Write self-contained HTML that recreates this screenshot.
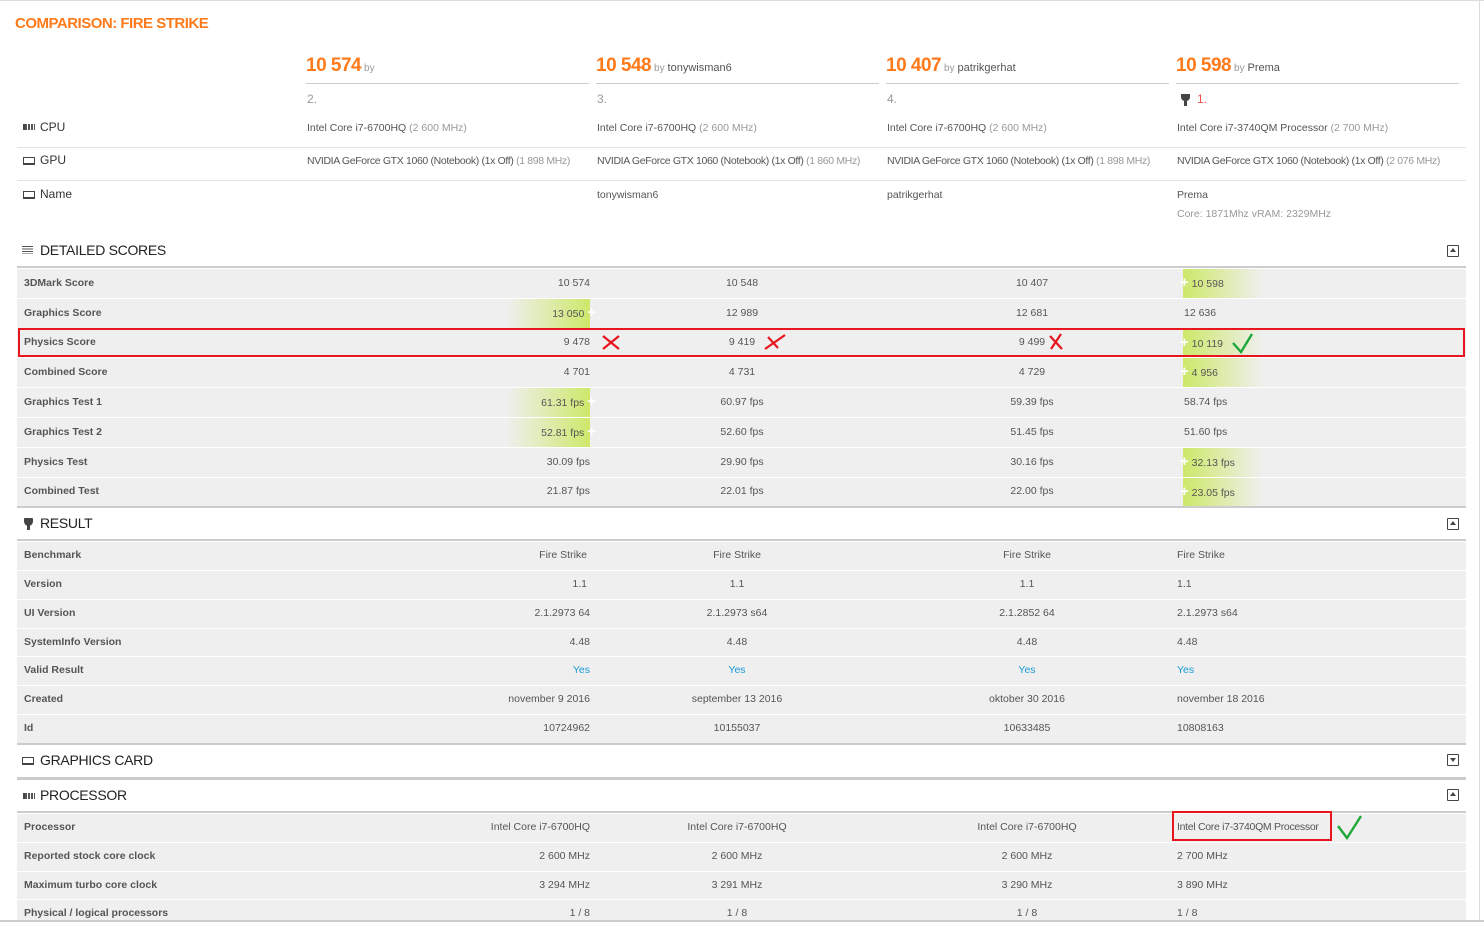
<!DOCTYPE html>
<html><head><meta charset="utf-8"><style>
*{margin:0;padding:0;box-sizing:border-box}
body{width:1484px;height:922px;overflow:hidden;background:#fff;font-family:"Liberation Sans",sans-serif;color:#555;position:relative;font-size:10.5px}
.a{position:absolute;white-space:nowrap}
.r{position:absolute;left:17px;width:1449px;background:#efefef;border-top:1px solid #fff}
.r span{position:absolute;top:0;white-space:nowrap}
.l{left:7px;font-weight:bold;color:#555}
.c1{right:876px;text-align:right}
.c2,.c3{width:200px;text-align:center}
.c4{left:1167px}
.g1{position:absolute;top:0;bottom:0;left:490px;width:83px;background:linear-gradient(to right,rgba(205,232,106,0),#cde86a)}
.g4{position:absolute;top:0;bottom:0;left:1166px;width:80px;background:linear-gradient(to right,#cde86a,rgba(205,232,106,0))}
.pl{color:#fff;font-weight:bold;font-size:15px}
.h{position:absolute;left:40px;font-size:14px;color:#222;letter-spacing:-0.3px}
.hl{position:absolute;left:17px;width:1449px;height:2px;background:#ccc}
.sc{font-size:19px;font-weight:bold;color:#ff7a1a;letter-spacing:-0.5px}
.by{font-size:10px;color:#999}
.byn{font-size:11px;color:#555}
.ul{position:absolute;height:1px;background:#ccc;top:83px;width:283px}
.gr{color:#999}
.tg{position:absolute;width:12px;height:12px;border:1.5px solid #444;border-radius:1px;left:1447px}
.y{color:#1a9ad6}
.gpu{letter-spacing:-0.35px}
</style></head><body>
<div class="a" style="left:0;top:0;width:1484px;height:1px;background:#ddd"></div>
<div class="a" style="left:1479px;top:0;width:1px;height:922px;background:#ddd"></div>
<div class="a" style="left:15px;top:15px;font-size:15px;font-weight:bold;color:#ff7a1a;letter-spacing:-0.5px">COMPARISON: FIRE STRIKE</div>

<div class="a" style="left:306px;top:55px"><span class="sc">10 574</span> <span class="by">by</span></div>
<div class="a" style="left:596px;top:55px"><span class="sc">10 548</span> <span class="by">by</span> <span class="byn">tonywisman6</span></div>
<div class="a" style="left:886px;top:55px"><span class="sc">10 407</span> <span class="by">by</span> <span class="byn">patrikgerhat</span></div>
<div class="a" style="left:1176px;top:55px"><span class="sc">10 598</span> <span class="by">by</span> <span class="byn">Prema</span></div>
<div class="ul" style="left:306px"></div><div class="ul" style="left:596px"></div><div class="ul" style="left:886px"></div><div class="ul" style="left:1176px"></div>
<div class="a gr" style="left:307px;top:92px;font-size:12px">2.</div>
<div class="a gr" style="left:597px;top:92px;font-size:12px">3.</div>
<div class="a gr" style="left:887px;top:92px;font-size:12px">4.</div>
<div class="a" style="left:1181px;top:94px;width:9px;height:7px;background:#444;border-radius:0 0 4px 4px"></div>
<div class="a" style="left:1184px;top:101px;width:3px;height:5px;background:#444"></div>
<div class="a" style="left:1197px;top:92px;font-size:12px;color:#f05050">1.</div>

<div class="a" style="left:23px;top:124px;width:12px;height:6px;border-left:2px solid #444;background:repeating-linear-gradient(to right,#555 0 2px,#fff 2px 3px)"></div>
<div class="a" style="left:40px;top:120px;font-size:12px;color:#333">CPU</div>
<div class="a" style="left:23px;top:157px;width:12px;height:8px;border:1.5px solid #444;border-bottom-width:2.5px"></div>
<div class="a" style="left:40px;top:153px;font-size:12px;color:#333">GPU</div>
<div class="a" style="left:23px;top:191px;width:12px;height:8px;border:1.5px solid #444;border-bottom-width:2.5px"></div>
<div class="a" style="left:40px;top:187px;font-size:12px;color:#333">Name</div>
<div class="a" style="left:17px;top:147px;width:1449px;height:1px;background:#e4e4e4"></div>
<div class="a" style="left:17px;top:180px;width:1449px;height:1px;background:#e4e4e4"></div>
<div class="a" style="left:307px;top:122px">Intel Core i7-6700HQ <span class="gr">(2 600 MHz)</span></div>
<div class="a" style="left:597px;top:122px">Intel Core i7-6700HQ <span class="gr">(2 600 MHz)</span></div>
<div class="a" style="left:887px;top:122px">Intel Core i7-6700HQ <span class="gr">(2 600 MHz)</span></div>
<div class="a" style="left:1177px;top:122px">Intel Core i7-3740QM Processor <span class="gr">(2 700 MHz)</span></div>
<div class="a gpu" style="left:307px;top:155px">NVIDIA GeForce GTX 1060 (Notebook) (1x Off) <span class="gr">(1 898 MHz)</span></div>
<div class="a gpu" style="left:597px;top:155px">NVIDIA GeForce GTX 1060 (Notebook) (1x Off) <span class="gr">(1 860 MHz)</span></div>
<div class="a gpu" style="left:887px;top:155px">NVIDIA GeForce GTX 1060 (Notebook) (1x Off) <span class="gr">(1 898 MHz)</span></div>
<div class="a gpu" style="left:1177px;top:155px">NVIDIA GeForce GTX 1060 (Notebook) (1x Off) <span class="gr">(2 076 MHz)</span></div>
<div class="a" style="left:597px;top:189px">tonywisman6</div>
<div class="a" style="left:887px;top:189px">patrikgerhat</div>
<div class="a" style="left:1177px;top:189px">Prema</div>
<div class="a gr" style="left:1177px;top:208px">Core: 1871Mhz vRAM: 2329MHz</div>

<!-- DETAILED -->
<div class="a" style="left:22px;top:246px;width:11px;height:8px;background:repeating-linear-gradient(#555 0 1px,#fff 1px 2.5px)"></div>
<div class="h" style="top:242px">DETAILED SCORES</div>
<div class="tg" style="top:245px"><div class="a" style="left:2px;top:2px;border:3px solid transparent;border-bottom:4px solid #444;border-top:0"></div></div>
<div class="hl" style="top:266px"></div>

<div class="r" style="top:268px;height:30px;line-height:28px"><span class="l">3DMark Score</span><span class="c1">10 574</span><span class="c2" style="left:625px">10 548</span><span class="c3" style="left:915px">10 407</span><div class="g4"></div><span class="c4" style="left:1163px"><b class="pl">+</b> 10 598</span></div>
<div class="r" style="top:298px;height:30px;line-height:28px"><div class="g1"></div><span class="l">Graphics Score</span><span class="c1" style="right:870px">13 050 <b class="pl">+</b></span><span class="c2" style="left:625px">12 989</span><span class="c3" style="left:915px">12 681</span><span class="c4">12 636</span></div>
<div class="r" style="top:328px;height:29px;line-height:27px"><span class="l">Physics Score</span><span class="c1">9 478</span><span class="c2" style="left:625px">9 419</span><span class="c3" style="left:915px">9 499</span><div class="g4"></div><span class="c4" style="left:1163px"><b class="pl">+</b> 10 119</span></div>
<div class="r" style="top:357px;height:30px;line-height:28px"><span class="l">Combined Score</span><span class="c1">4 701</span><span class="c2" style="left:625px">4 731</span><span class="c3" style="left:915px">4 729</span><div class="g4"></div><span class="c4" style="left:1163px"><b class="pl">+</b> 4 956</span></div>
<div class="r" style="top:387px;height:30px;line-height:28px"><div class="g1"></div><span class="l">Graphics Test 1</span><span class="c1" style="right:870px">61.31 fps <b class="pl">+</b></span><span class="c2" style="left:625px">60.97 fps</span><span class="c3" style="left:915px">59.39 fps</span><span class="c4">58.74 fps</span></div>
<div class="r" style="top:417px;height:30px;line-height:28px"><div class="g1"></div><span class="l">Graphics Test 2</span><span class="c1" style="right:870px">52.81 fps <b class="pl">+</b></span><span class="c2" style="left:625px">52.60 fps</span><span class="c3" style="left:915px">51.45 fps</span><span class="c4">51.60 fps</span></div>
<div class="r" style="top:447px;height:30px;line-height:28px"><span class="l">Physics Test</span><span class="c1">30.09 fps</span><span class="c2" style="left:625px">29.90 fps</span><span class="c3" style="left:915px">30.16 fps</span><div class="g4"></div><span class="c4" style="left:1163px"><b class="pl">+</b> 32.13 fps</span></div>
<div class="r" style="top:477px;height:29px;line-height:27px"><span class="l">Combined Test</span><span class="c1">21.87 fps</span><span class="c2" style="left:625px">22.01 fps</span><span class="c3" style="left:915px">22.00 fps</span><div class="g4"></div><span class="c4" style="left:1163px"><b class="pl">+</b> 23.05 fps</span></div>
<div class="hl" style="top:506px"></div>

<!-- RESULT -->
<div class="a" style="left:24px;top:518px;width:9px;height:8px;background:#444;border-radius:1px 1px 5px 5px"></div>
<div class="a" style="left:27px;top:525px;width:3px;height:5px;background:#444"></div>
<div class="h" style="top:515px">RESULT</div>
<div class="tg" style="top:518px"><div class="a" style="left:2px;top:2px;border:3px solid transparent;border-bottom:4px solid #444;border-top:0"></div></div>
<div class="hl" style="top:539px"></div>
<div class="r" style="top:541px;height:29px;line-height:27px"><span class="l">Benchmark</span><span class="c1" style="right:879px">Fire Strike</span><span class="c2" style="left:620px">Fire Strike</span><span class="c3" style="left:910px">Fire Strike</span><span class="c4" style="left:1160px">Fire Strike</span></div>
<div class="r" style="top:570px;height:29px;line-height:27px"><span class="l">Version</span><span class="c1" style="right:879px">1.1</span><span class="c2" style="left:620px">1.1</span><span class="c3" style="left:910px">1.1</span><span class="c4" style="left:1160px">1.1</span></div>
<div class="r" style="top:599px;height:29px;line-height:27px"><span class="l">UI Version</span><span class="c1">2.1.2973 64</span><span class="c2" style="left:620px">2.1.2973 s64</span><span class="c3" style="left:910px">2.1.2852 64</span><span class="c4" style="left:1160px">2.1.2973 s64</span></div>
<div class="r" style="top:628px;height:28px;line-height:26px"><span class="l">SystemInfo Version</span><span class="c1">4.48</span><span class="c2" style="left:620px">4.48</span><span class="c3" style="left:910px">4.48</span><span class="c4" style="left:1160px">4.48</span></div>
<div class="r" style="top:656px;height:29px;line-height:27px"><span class="l">Valid Result</span><span class="c1 y">Yes</span><span class="c2 y" style="left:620px">Yes</span><span class="c3 y" style="left:910px">Yes</span><span class="c4 y" style="left:1160px">Yes</span></div>
<div class="r" style="top:685px;height:29px;line-height:27px"><span class="l">Created</span><span class="c1">november 9 2016</span><span class="c2" style="left:620px">september 13 2016</span><span class="c3" style="left:910px">oktober 30 2016</span><span class="c4" style="left:1160px">november 18 2016</span></div>
<div class="r" style="top:714px;height:29px;line-height:27px"><span class="l">Id</span><span class="c1">10724962</span><span class="c2" style="left:620px">10155037</span><span class="c3" style="left:910px">10633485</span><span class="c4" style="left:1160px">10808163</span></div>
<div class="hl" style="top:743px"></div>

<!-- GRAPHICS CARD -->
<div class="a" style="left:22px;top:757px;width:12px;height:8px;border:1.5px solid #444;border-bottom-width:2.5px"></div>
<div class="h" style="top:752px">GRAPHICS CARD</div>
<div class="tg" style="top:754px"><div class="a" style="left:2px;top:3px;border:3px solid transparent;border-top:4px solid #444;border-bottom:0"></div></div>
<div class="hl" style="top:777px;height:3px"></div>

<!-- PROCESSOR -->
<div class="a" style="left:23px;top:793px;width:12px;height:6px;border-left:2px solid #444;background:repeating-linear-gradient(to right,#555 0 2px,#fff 2px 3px)"></div>
<div class="h" style="top:787px">PROCESSOR</div>
<div class="tg" style="top:789px"><div class="a" style="left:2px;top:2px;border:3px solid transparent;border-bottom:4px solid #444;border-top:0"></div></div>
<div class="hl" style="top:811px"></div>
<div class="r" style="top:813px;height:29px;line-height:27px"><span class="l">Processor</span><span class="c1">Intel Core i7-6700HQ</span><span class="c2" style="left:620px">Intel Core i7-6700HQ</span><span class="c3" style="left:910px">Intel Core i7-6700HQ</span><span class="c4" style="left:1160px;letter-spacing:-0.3px">Intel Core i7-3740QM Processor</span></div>
<div class="r" style="top:842px;height:29px;line-height:27px"><span class="l">Reported stock core clock</span><span class="c1">2 600 MHz</span><span class="c2" style="left:620px">2 600 MHz</span><span class="c3" style="left:910px">2 600 MHz</span><span class="c4" style="left:1160px">2 700 MHz</span></div>
<div class="r" style="top:871px;height:28px;line-height:26px"><span class="l">Maximum turbo core clock</span><span class="c1">3 294 MHz</span><span class="c2" style="left:620px">3 291 MHz</span><span class="c3" style="left:910px">3 290 MHz</span><span class="c4" style="left:1160px">3 890 MHz</span></div>
<div class="r" style="top:899px;height:23px;line-height:27px"><span class="l">Physical / logical processors</span><span class="c1">1 / 8</span><span class="c2" style="left:620px">1 / 8</span><span class="c3" style="left:910px">1 / 8</span><span class="c4" style="left:1160px">1 / 8</span></div>

<!-- red/green marks on top -->
<div class="a" style="left:18px;top:328px;width:1447px;height:29px;border:2px solid #e8141e"></div>
<div class="a" style="left:1172px;top:811px;width:160px;height:30px;border:2px solid #e8141e"></div>
<svg class="a" style="left:0;top:0" width="1484" height="922">
<g stroke="#e8141e" stroke-width="2.2" fill="none">
<path d="M603 336 L619 349 M603 349 L619 336"/>
<path d="M765 349 L785 335 M768 337 L778 348"/>
<path d="M1051 349 L1061 334 M1050 336 L1062 349"/>
</g>
<g stroke="#1ea83a" stroke-width="2.4" fill="none">
<path d="M1233 343 L1241 352 L1252 334"/>
<path d="M1338 826 L1347 838 L1361 816"/>
</g>
</svg>
<div class="a" style="left:0;top:920px;width:1484px;height:2px;background:#ccc"></div>
</body></html>
